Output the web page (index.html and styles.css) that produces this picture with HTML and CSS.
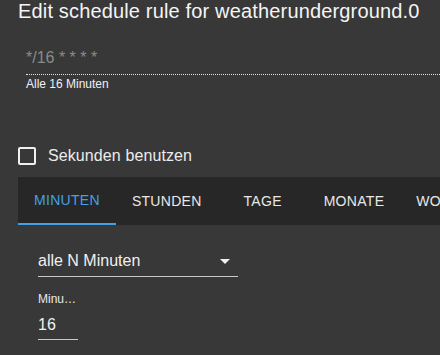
FILE: index.html
```html
<!DOCTYPE html>
<html lang="de">
<head>
<meta charset="utf-8">
<title>Edit schedule rule</title>
<link rel="stylesheet" href="styles.css">
</head>
<body>
<div class="dialog">
  <h2 class="title">Edit schedule rule for weatherunderground.0</h2>
  <div class="cron">
    <div class="cron-input">*/16 * * * *</div>
    <div class="cron-desc">Alle 16 Minuten</div>
  </div>
  <label class="check-row">
    <span class="checkbox"></span>
    <span class="check-label">Sekunden benutzen</span>
  </label>
  <div class="tabs">
    <div class="tab active">Minuten</div>
    <div class="tab">Stunden</div>
    <div class="tab">Tage</div>
    <div class="tab">Monate</div>
    <div class="tab">Wochentage</div>
  </div>
  <div class="panel">
    <div class="select">
      <span class="select-value">alle N Minuten</span>
      <span class="select-arrow"></span>
    </div>
    <div class="field">
      <div class="field-label">Minuten</div>
      <div class="field-input">16</div>
    </div>
  </div>
</div>
</body>
</html>
```
FILE: styles.css
```css
html, body {
  margin: 0;
  padding: 0;
  background: #383838;
  overflow: hidden;
}
body {
  width: 440px;
  height: 355px;
  font-family: "Liberation Sans", Arial, sans-serif;
  color: #ececec;
}
.dialog {
  display: flex;
  flex-direction: column;
}
.title {
  margin: 0;
  padding-left: 18px;
  font-size: 20px;
  line-height: 23px;
  letter-spacing: 0.16px;
  font-weight: normal;
  color: #f4f4f4;
  white-space: nowrap;
}
.cron {
  margin-top: 25px;
  margin-left: 26px;
}
.cron-input {
  font-size: 16px;
  line-height: 19px;
  color: #8a8a8a;
  padding-bottom: 7px;
  border-bottom: 1px dotted #e0e0e0;
}
.cron-desc {
  margin-top: 2px;
  font-size: 12px;
  line-height: 14px;
  color: #f0f0f0;
}
.check-row {
  display: flex;
  align-items: center;
  margin-top: 56px;
  margin-left: 18px;
  height: 18px;
}
.checkbox {
  width: 18px;
  height: 18px;
  box-sizing: border-box;
  border: 2px solid #f0f0f0;
  border-radius: 2px;
}
.check-label {
  margin-left: 12px;
  font-size: 16px;
  line-height: 18px;
  letter-spacing: 0.1px;
  color: #ececec;
}
.tabs {
  margin-top: 12px;
  margin-left: 18px;
  height: 48px;
  background: #272727;
  display: flex;
  flex-wrap: nowrap;
  overflow: hidden;
}
.tab {
  flex: none;
  min-width: 90px;
  box-sizing: border-box;
  padding: 0 16px;
  text-align: center;
  font-size: 14px;
  line-height: 48px;
  letter-spacing: 0.3px;
  text-transform: uppercase;
  color: #e8e8e8;
  white-space: nowrap;
}
.tab.active {
  color: #44a0e4;
  line-height: 46px;
  border-bottom: 2px solid #44a0e4;
}
.panel {
  margin-left: 38px;
  display: flex;
  flex-direction: column;
}
.select {
  margin-top: 26px;
  width: 200px;
  display: flex;
  align-items: center;
  justify-content: space-between;
  padding-bottom: 6px;
  border-bottom: 1px solid #c8c8c8;
}
.select-value {
  font-size: 16px;
  line-height: 19px;
  color: #f0f0f0;
}
.select-arrow {
  width: 0;
  height: 0;
  margin-right: 8px;
  margin-top: 2px;
  border-left: 5px solid transparent;
  border-right: 5px solid transparent;
  border-top: 5px solid #f0f0f0;
}
.field {
  width: 40px;
  margin-top: 15px;
}
.field-label {
  font-size: 12px;
  line-height: 14px;
  color: #e8e8e8;
  white-space: nowrap;
  overflow: hidden;
  text-overflow: ellipsis;
}
.field-input {
  margin-top: 9px;
  font-size: 16px;
  line-height: 19px;
  color: #f0f0f0;
  padding-bottom: 5px;
  border-bottom: 1px solid #c8c8c8;
}
```
